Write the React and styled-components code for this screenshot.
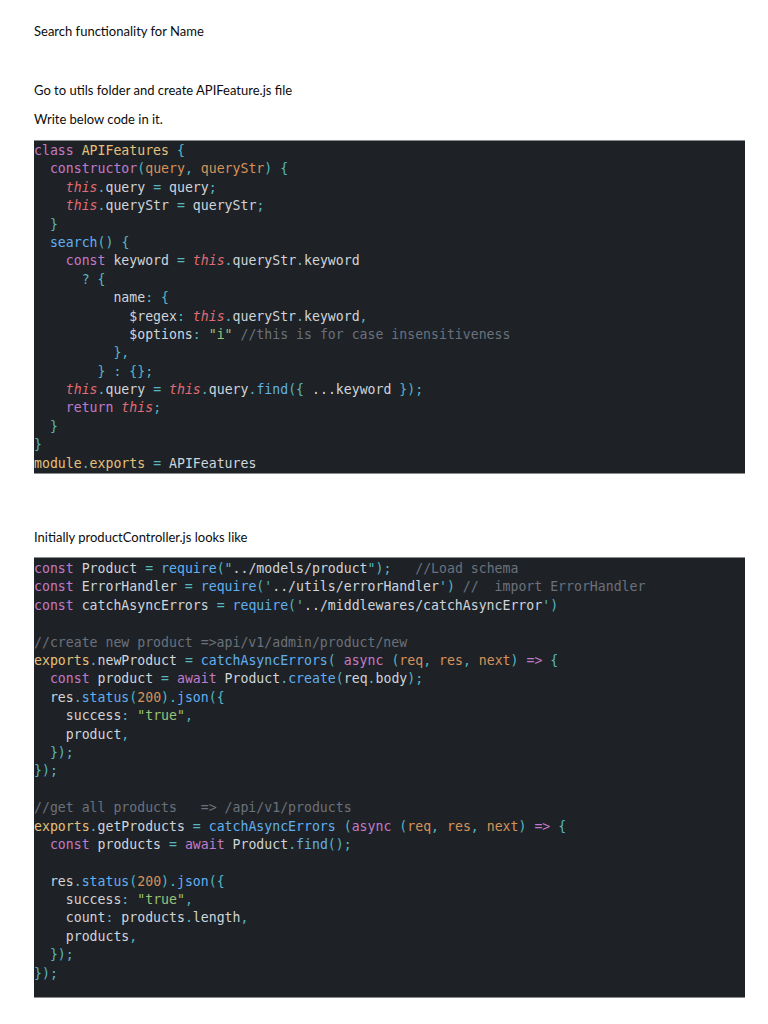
import React from 'react';
import styled, {createGlobalStyle} from 'styled-components';

const GlobalStyle = createGlobalStyle`
  body {
    margin: 0;
    background: #ffffff;
  }
`;

const Page = styled.div`
  width: 768px;
  padding: 22px 0 0 34px;
  box-sizing: border-box;
`;

const Para = styled.p`
  margin: ${p => p.$top || 0}px 0 0;
  font-family: Lato, "Liberation Sans", sans-serif;
  font-size: 13px;
  line-height: 18px;
  color: #0c0c0c;
`;

const CodeBlock = styled.pre`
  margin: ${p => p.$top || 0}px 0 0;
  width: 711px;
  box-sizing: border-box;
  padding: ${p => p.$pad || 0}px 0 ${p => p.$padBottom || 0}px;
  background: #1e2226;
  border-top: 1px solid #8a8c8e;
  border-bottom: 1px solid #8a8c8e;
  font-family: "DejaVu Sans Mono", "Liberation Mono", monospace;
  font-size: 13.2px;
  line-height: 18.4px;
  color: #d0d4db;
  white-space: pre;
  overflow: hidden;
`;

const Line = styled.div`
  height: 18.4px;
`;

const colors = {
  kw: '#c27ac9',
  cls: '#e5c07b',
  fn: '#61afef',
  prm: '#d6925a',
  ths: '#e06c75',
  p: '#56b6c2',
  s: '#98c379',
  c: '#6a717c',
  t: '#d0d4db',
  n: '#d6925a',
  y: '#e5c07b',
};

const Tok = styled.span`
  color: ${p => colors[p.$kind] || colors.t};
  font-style: ${p => (p.$kind === 'ths' ? 'italic' : 'normal')};
`;

// each line: list of [kind, text]
const apiFeatures = [
  [['kw', 'class'], ['t', ' '], ['cls', 'APIFeatures'], ['t', ' '], ['p', '{']],
  [['t', '  '], ['kw', 'constructor'], ['p', '('], ['prm', 'query'], ['p', ', '], ['prm', 'queryStr'], ['p', ')'], ['t', ' '], ['p', '{']],
  [['t', '    '], ['ths', 'this'], ['p', '.'], ['t', 'query '], ['p', '='], ['t', ' query'], ['p', ';']],
  [['t', '    '], ['ths', 'this'], ['p', '.'], ['t', 'queryStr '], ['p', '='], ['t', ' queryStr'], ['p', ';']],
  [['t', '  '], ['p', '}']],
  [['t', '  '], ['fn', 'search'], ['p', '()'], ['t', ' '], ['p', '{']],
  [['t', '    '], ['kw', 'const'], ['t', ' keyword '], ['p', '='], ['t', ' '], ['ths', 'this'], ['p', '.'], ['t', 'queryStr'], ['p', '.'], ['t', 'keyword']],
  [['t', '      '], ['p', '? {']],
  [['t', '          name'], ['p', ':'], ['t', ' '], ['p', '{']],
  [['t', '            $regex'], ['p', ':'], ['t', ' '], ['ths', 'this'], ['p', '.'], ['t', 'queryStr'], ['p', '.'], ['t', 'keyword'], ['p', ',']],
  [['t', '            $options'], ['p', ':'], ['t', ' '], ['s', '"i"'], ['t', ' '], ['c', '//this is for case insensitiveness']],
  [['t', '          '], ['p', '},']],
  [['t', '        '], ['p', '} : {};']],
  [['t', '    '], ['ths', 'this'], ['p', '.'], ['t', 'query '], ['p', '='], ['t', ' '], ['ths', 'this'], ['p', '.'], ['t', 'query'], ['p', '.'], ['fn', 'find'], ['p', '({'], ['t', ' ...keyword '], ['p', '});']],
  [['t', '    '], ['kw', 'return'], ['t', ' '], ['ths', 'this'], ['p', ';']],
  [['t', '  '], ['p', '}']],
  [['p', '}']],
  [['y', 'module'], ['p', '.'], ['y', 'exports'], ['t', ' '], ['p', '='], ['t', ' APIFeatures']],
];

const productController = [
  [['kw', 'const'], ['t', ' Product '], ['p', '='], ['t', ' '], ['fn', 'require'], ['p', '("'], ['t', '../models/product'], ['p', '");'], ['t', '   '], ['c', '//Load schema']],
  [['kw', 'const'], ['t', ' ErrorHandler '], ['p', '='], ['t', ' '], ['fn', 'require'], ['p', "('"], ['t', '../utils/errorHandler'], ['p', "')"], ['t', ' '], ['c', '//  import ErrorHandler']],
  [['kw', 'const'], ['t', ' catchAsyncErrors '], ['p', '='], ['t', ' '], ['fn', 'require'], ['p', "('"], ['t', '../middlewares/catchAsyncError'], ['p', "')"]],
  [],
  [['c', '//create new product =>api/v1/admin/product/new']],
  [['y', 'exports'], ['p', '.'], ['t', 'newProduct '], ['p', '='], ['t', ' '], ['fn', 'catchAsyncErrors'], ['p', '('], ['t', ' '], ['kw', 'async'], ['t', ' '], ['p', '('], ['prm', 'req'], ['p', ', '], ['prm', 'res'], ['p', ', '], ['prm', 'next'], ['p', ')'], ['t', ' '], ['kw', '=>'], ['t', ' '], ['p', '{']],
  [['t', '  '], ['kw', 'const'], ['t', ' product '], ['p', '='], ['t', ' '], ['kw', 'await'], ['t', ' Product'], ['p', '.'], ['fn', 'create'], ['p', '('], ['t', 'req'], ['p', '.'], ['t', 'body'], ['p', ');']],
  [['t', '  res'], ['p', '.'], ['fn', 'status'], ['p', '('], ['n', '200'], ['p', ').'], ['fn', 'json'], ['p', '({']],
  [['t', '    success'], ['p', ':'], ['t', ' '], ['s', '"true"'], ['p', ',']],
  [['t', '    product'], ['p', ',']],
  [['t', '  '], ['p', '});']],
  [['p', '});']],
  [],
  [['c', '//get all products   => /api/v1/products']],
  [['y', 'exports'], ['p', '.'], ['t', 'getProducts '], ['p', '='], ['t', ' '], ['fn', 'catchAsyncErrors'], ['t', ' '], ['p', '('], ['kw', 'async'], ['t', ' '], ['p', '('], ['prm', 'req'], ['p', ', '], ['prm', 'res'], ['p', ', '], ['prm', 'next'], ['p', ')'], ['t', ' '], ['kw', '=>'], ['t', ' '], ['p', '{']],
  [['t', '  '], ['kw', 'const'], ['t', ' products '], ['p', '='], ['t', ' '], ['kw', 'await'], ['t', ' Product'], ['p', '.'], ['fn', 'find'], ['p', '();']],
  [],
  [['t', '  res'], ['p', '.'], ['fn', 'status'], ['p', '('], ['n', '200'], ['p', ').'], ['fn', 'json'], ['p', '({']],
  [['t', '    success'], ['p', ':'], ['t', ' '], ['s', '"true"'], ['p', ',']],
  [['t', '    count'], ['p', ':'], ['t', ' products'], ['p', '.'], ['t', 'length'], ['p', ',']],
  [['t', '    products'], ['p', ',']],
  [['t', '  '], ['p', '});']],
  [['p', '});']],
];

const Code = ({lines, top, pad, padBottom}) => (
  <CodeBlock $top={top} $pad={pad} $padBottom={padBottom}>
    {lines.map((line, i) => (
      <Line key={i}>
        {line.map(([kind, text], j) => (
          <Tok key={j} $kind={kind}>{text}</Tok>
        ))}
      </Line>
    ))}
  </CodeBlock>
);

export default function App() {
  return (
    <Page>
      <GlobalStyle />
      <Para>Search functionality for Name</Para>
      <Para $top={41}>Go to utils folder and create APIFeature.js file</Para>
      <Para $top={11}>Write below code in it.</Para>
      <Code lines={apiFeatures} top={12} pad={1} />
      <Para $top={54}>Initially productController.js looks like</Para>
      <Code lines={productController} top={11} pad={2} padBottom={14} />
    </Page>
  );
}
